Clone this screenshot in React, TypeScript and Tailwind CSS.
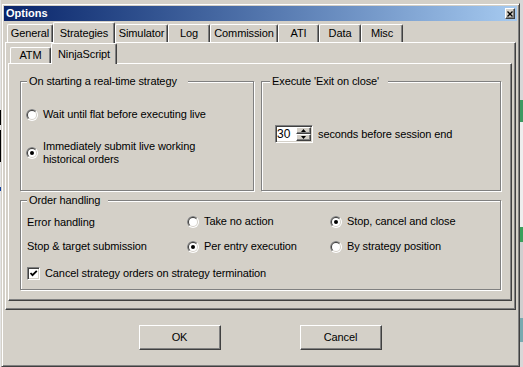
const raised =
  "border border-t-white border-l-white border-r-[#404040] border-b-[#404040] shadow-[inset_-1px_-1px_0_#808080]";
const sunken =
  "border border-t-[#808080] border-l-[#808080] border-r-white border-b-white shadow-[inset_1px_1px_0_#404040,inset_-1px_-1px_0_#d4d0c8]";
const tabBase =
  "flex items-center justify-center border-t border-l border-r border-t-white border-l-white border-r-[#404040] shadow-[inset_-1px_0_0_#808080] rounded-t-[2px]";
const tabOff = `${tabBase} h-[18px]`;
const tabOn = `${tabBase} relative z-10 -mb-px h-[21px] bg-[#d4d0c8]`;
const group =
  "border border-[#808080] shadow-[1px_1px_0_#fff,inset_1px_1px_0_#fff]";

function Radio({ checked }: { checked?: boolean }) {
  return (
    <svg width="12" height="12" viewBox="0 0 12 12" className="shrink-0">
      <circle cx="6" cy="6" r="6" fill="#fff" />
      <path d="M1.757 10.243A6 6 0 0 1 10.243 1.757Z" fill="#808080" />
      <circle cx="6" cy="6" r="5" fill="#d4d0c8" />
      <path d="M2.464 9.536A5 5 0 0 1 9.536 2.464Z" fill="#404040" />
      <circle cx="6" cy="6" r="4" fill="#fff" />
      {checked && <circle cx="6" cy="6" r="2" fill="#000" />}
    </svg>
  );
}

function Check() {
  return (
    <div className={`${sunken} flex h-[13px] w-[13px] shrink-0 items-center justify-center bg-white`}>
      <svg width="9" height="9" viewBox="0 0 9 9">
        <path d="M1.5 4 L3.5 6.2 L7.8 1.8" stroke="#000" strokeWidth="1.8" fill="none" />
      </svg>
    </div>
  );
}

function SpinBtn({ up }: { up?: boolean }) {
  return (
    <div className={`${raised} flex h-[7px] w-[15px] items-center justify-center bg-[#d4d0c8]`}>
      <svg width="5" height="3" viewBox="0 0 5 3">
        <path d={up ? "M0 3 L2.5 0 L5 3Z" : "M0 0 L2.5 3 L5 0Z"} fill="#000" />
      </svg>
    </div>
  );
}

export default function App() {
  return (
    <div className="flex h-[367px] w-[523px] overflow-hidden bg-[#d4d0c8] font-['Liberation_Sans',Arial,sans-serif] text-[11px] leading-[13px] tracking-[-0.1px] text-black">
      {/* desktop behind, left edge */}
      <div className="flex w-[1px] flex-col bg-[#e4e4e4]">
        <div className="mt-[110px] h-[15px] bg-black" />
        <div className="mt-[5px] h-[32px] bg-black" />
        <div className="mt-[25px] h-[4px] bg-[#1040a0]" />
      </div>

      {/* window */}
      <div className={`mt-[3px] flex h-[364px] w-[519px] shrink-0 flex-col border border-t-[#d4d0c8] border-l-[#d4d0c8] border-r-[#404040] border-b-[#404040] p-[2px] shadow-[inset_1px_1px_0_#fff,inset_-1px_-1px_0_#808080]`}>
        {/* title bar */}
        <div className="flex h-[15px] items-center justify-between bg-gradient-to-r from-[#0a246a] to-[#a6caf0] pl-[2px]">
          <span className="text-[11px] font-bold tracking-normal text-white">Options</span>
          <div className={`${raised} mr-[2px] flex h-[11px] w-[10px] items-center justify-center bg-[#d4d0c8]`}>
            <svg width="6" height="6" viewBox="0 0 6 6">
              <path d="M0.5 0.5 L5.5 5.5 M5.5 0.5 L0.5 5.5" stroke="#000" strokeWidth="1.3" />
            </svg>
          </div>
        </div>

        {/* outer tabs */}
        <div className="ml-[1px] mt-[1px] w-[511px]">
          <div className="flex h-[20px] items-end pl-[2px]">
            <div className={`${tabOff} w-[46px]`}>General</div>
            <div className={`${tabOn} w-[62px]`}>Strategies</div>
            <div className={`${tabOff} w-[53px]`}>Simulator</div>
            <div className={`${tabOff} w-[42px]`}>Log</div>
            <div className={`${tabOff} w-[68px]`}>Commission</div>
            <div className={`${tabOff} w-[41px]`}>ATI</div>
            <div className={`${tabOff} w-[42px]`}>Data</div>
            <div className={`${tabOff} w-[42px]`}>Misc</div>
          </div>

          <div className={`${raised} h-[268px] pl-[2px]`}>
            {/* inner tabs */}
            <div className="w-[504px]">
              <div className="flex h-[20px] items-end pl-[2px]">
                <div className={`${tabBase} h-[16px] w-[41px]`}>ATM</div>
                <div className={`${tabOn} w-[66px]`}>NinjaScript</div>
              </div>

              <div className={`${raised} h-[238px] pl-[11px] pt-[11px]`}>
                <div className="flex items-start gap-[7px]">
                  <fieldset className={`${group} h-[116px] w-[234px]`}>
                    <legend className="ml-[6px] bg-[#d4d0c8] pl-[2px] pr-[11px]">
                      On starting a real-time strategy
                    </legend>
                    <div className="flex flex-col pl-[5px] pt-[20px]">
                      <div className="flex h-[13px] items-center gap-[5px]">
                        <Radio />
                        <span>Wait until flat before executing live</span>
                      </div>
                      <div className="mt-[19px] flex items-center gap-[5px]">
                        <Radio checked />
                        <span>
                          Immediately submit live working
                          <br />
                          historical orders
                        </span>
                      </div>
                    </div>
                  </fieldset>

                  <fieldset className={`${group} h-[116px] w-[240px]`}>
                    <legend className="ml-[8px] bg-[#d4d0c8] pl-[2px] pr-[9px]">
                      Execute 'Exit on close'
                    </legend>
                    <div className="flex items-center gap-[5px] pl-[13px] pt-[37px]">
                      <div className={`${sunken} flex h-[18px] w-[38px] items-center justify-between bg-white pl-[1px] pr-[1px]`}>
                        <span className="text-[12px] tracking-normal">30</span>
                        <div className="flex flex-col">
                          <SpinBtn up />
                          <SpinBtn />
                        </div>
                      </div>
                      <span>seconds before session end</span>
                    </div>
                  </fieldset>
                </div>

                <fieldset className={`${group} mt-[3px] h-[96px] w-[481px]`}>
                  <legend className="ml-[6px] bg-[#d4d0c8] pl-[2px] pr-[8px]">Order handling</legend>
                  <div className="flex flex-col pl-[6px] pt-[8px]">
                    <div className="flex h-[13px] items-center">
                      <span className="w-[160px] pt-[2px]">Error handling</span>
                      <div className="flex w-[143px] items-center gap-[5px]">
                        <Radio />
                        <span>Take no action</span>
                      </div>
                      <div className="flex items-center gap-[5px]">
                        <Radio checked />
                        <span>Stop, cancel and close</span>
                      </div>
                    </div>
                    <div className="mt-[12px] flex h-[13px] items-center">
                      <span className="w-[160px]">Stop &amp; target submission</span>
                      <div className="flex w-[143px] items-center gap-[5px]">
                        <Radio checked />
                        <span>Per entry execution</span>
                      </div>
                      <div className="flex items-center gap-[5px]">
                        <Radio />
                        <span>By strategy position</span>
                      </div>
                    </div>
                    <div className="mt-[14px] flex h-[13px] items-center gap-[5px]">
                      <Check />
                      <span>Cancel strategy orders on strategy termination</span>
                    </div>
                  </div>
                </fieldset>
              </div>
            </div>
          </div>
        </div>

        {/* buttons */}
        <div className="mt-[15px] flex justify-center gap-[79px] pr-[1px]">
          <button className={`${raised} flex h-[25px] w-[82px] items-center justify-center bg-[#d4d0c8]`}>OK</button>
          <button className={`${raised} flex h-[25px] w-[82px] items-center justify-center bg-[#d4d0c8]`}>Cancel</button>
        </div>
      </div>

      {/* desktop behind, right edge */}
      <div className="flex flex-1 flex-col bg-[#d8d8d8]">
        <div className="mt-[100px] h-[22px] bg-[#3c9a62]" />
        <div className="h-[105px] bg-[#eeeeee]" />
        <div className="h-[15px] bg-[#3aa05c]" />
        <div className="h-[76px] bg-[#cfcfcf]" />
        <div className="h-[24px] bg-[#78aab0]" />
      </div>
    </div>
  );
}
